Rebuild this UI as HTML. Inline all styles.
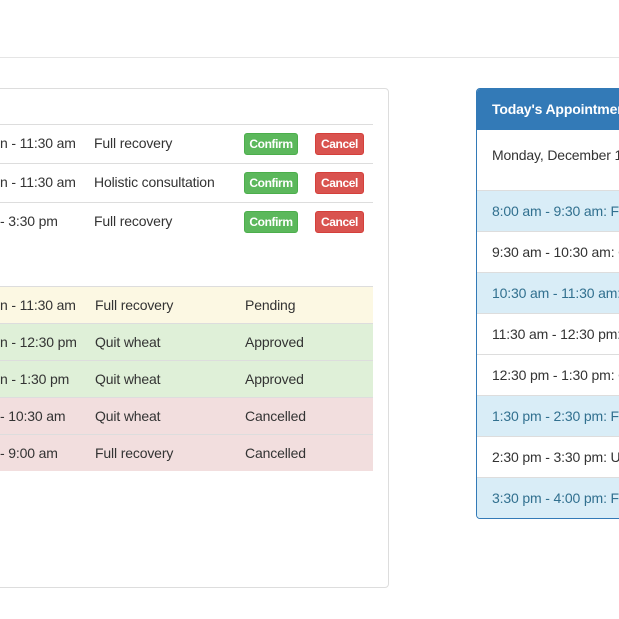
<!DOCTYPE html><html><head><style>
body{margin:0;width:619px;height:619px;overflow:hidden;background:#fff;font-family:"Liberation Sans",sans-serif;font-size:14px;letter-spacing:-0.15px;color:#333;position:relative}
.a{position:absolute;white-space:nowrap}
.hl{position:absolute;left:0;width:619px;top:57px;height:1px;background:#e5e5e5}
.pl{position:absolute;left:-10px;top:88px;width:397px;height:498px;border:1px solid #ddd;border-radius:4px}
.row{position:absolute;left:0;width:373px;border-top:1px solid #ddd}
.btn{position:absolute;height:20px;line-height:20px;border-radius:3px;color:#fff;font-size:12px;font-weight:bold;text-align:center;letter-spacing:-0.4px}
.g{background:#5cb85c;border:1px solid #4cae4c;width:52px}
.r{background:#d9534f;border:1px solid #d43f3a;width:47px}
.pr{position:absolute;left:476px;top:88px;width:160px;height:429px;border:1px solid #337ab7;border-radius:4px;overflow:hidden}
.ph{position:absolute;left:0;top:0;width:100%;height:41px;background:#337ab7;color:#fff;font-weight:bold}
.li{position:absolute;left:0;width:100%;height:40px;border-top:1px solid #ddd;line-height:40px;padding-left:15px;white-space:nowrap}
.info{background:#d9edf7;color:#31708f}
</style></head><body>
<div class="hl"></div>
<div class="pl"></div>
<div class="row" style="top:124px;height:39px"></div>
<div class="row" style="top:163px;height:39px"></div>
<div class="row" style="top:202px;height:39px"></div>
<div class="a" style="left:0;top:135px">n - 11:30 am</div><div class="a" style="left:94px;top:135px">Full recovery</div>
<div class="btn g" style="left:244px;top:133px">Confirm</div><div class="btn r" style="left:315px;top:133px">Cancel</div>
<div class="a" style="left:0;top:174px">n - 11:30 am</div><div class="a" style="left:94px;top:174px">Holistic consultation</div>
<div class="btn g" style="left:244px;top:172px">Confirm</div><div class="btn r" style="left:315px;top:172px">Cancel</div>
<div class="a" style="left:0;top:213px">- 3:30 pm</div><div class="a" style="left:94px;top:213px">Full recovery</div>
<div class="btn g" style="left:244px;top:211px">Confirm</div><div class="btn r" style="left:315px;top:211px">Cancel</div>

<div class="row" style="top:286px;height:36px;background:#fcf8e3"></div>
<div class="row" style="top:323px;height:36px;background:#dff0d8"></div>
<div class="row" style="top:360px;height:36px;background:#dff0d8"></div>
<div class="row" style="top:397px;height:36px;background:#f2dede"></div>
<div class="row" style="top:434px;height:36px;background:#f2dede"></div>
<div class="a" style="left:0;top:297px">n - 11:30 am</div><div class="a" style="left:95px;top:297px">Full recovery</div><div class="a" style="left:245px;top:297px">Pending</div>
<div class="a" style="left:0;top:334px">n - 12:30 pm</div><div class="a" style="left:95px;top:334px">Quit wheat</div><div class="a" style="left:245px;top:334px">Approved</div>
<div class="a" style="left:0;top:371px">n - 1:30 pm</div><div class="a" style="left:95px;top:371px">Quit wheat</div><div class="a" style="left:245px;top:371px">Approved</div>
<div class="a" style="left:0;top:408px">- 10:30 am</div><div class="a" style="left:95px;top:408px">Quit wheat</div><div class="a" style="left:245px;top:408px">Cancelled</div>
<div class="a" style="left:0;top:445px">- 9:00 am</div><div class="a" style="left:95px;top:445px">Full recovery</div><div class="a" style="left:245px;top:445px">Cancelled</div>

<div class="pr">
<div class="ph"><div class="a" style="left:15px;top:12px">Today's Appointments</div></div>
<div class="a" style="left:15px;top:58px">Monday, December 1</div>
<div class="li info" style="top:101px">8:00 am - 9:30 am: Full</div>
<div class="li" style="top:142px">9:30 am - 10:30 am: Open</div>
<div class="li info" style="top:183px">10:30 am - 11:30 am: Full</div>
<div class="li" style="top:224px">11:30 am - 12:30 pm: Open</div>
<div class="li" style="top:265px">12:30 pm - 1:30 pm: Open</div>
<div class="li info" style="top:306px">1:30 pm - 2:30 pm: Full</div>
<div class="li" style="top:347px">2:30 pm - 3:30 pm: Unavailable</div>
<div class="li info" style="top:388px">3:30 pm - 4:00 pm: Full</div>
</div>
</body></html>
